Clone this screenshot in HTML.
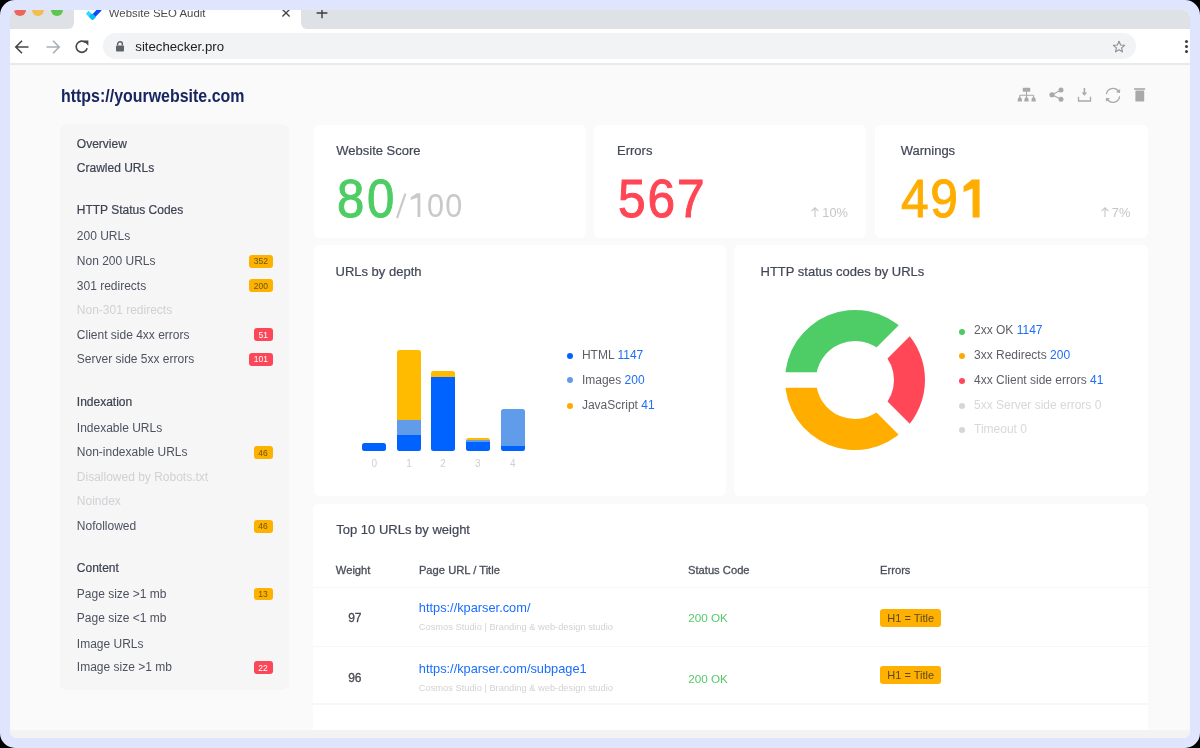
<!DOCTYPE html>
<html><head><meta charset="utf-8">
<style>
*{margin:0;padding:0;box-sizing:border-box}
html,body{width:1200px;height:748px;overflow:hidden;background:#000;font-family:"Liberation Sans",sans-serif}
.frame{position:absolute;left:0;top:0;width:1200px;height:748px;background:#dfe5fc;border-radius:15px}
.win{position:absolute;left:10px;top:10px;width:1180px;height:728px;border-radius:7px;overflow:hidden;background:#fafafa;will-change:transform}
.t{position:absolute;white-space:nowrap;line-height:0}
.r{position:absolute}
.b{position:absolute;border-radius:3px;font-size:8px;text-align:center;white-space:nowrap}
</style></head><body>
<div class="frame"></div>
<div class="win">
<div class="r" style="left:0.00px;top:0.00px;width:1180.00px;height:18.90px;background:#ffffff;"></div>
<div class="r" style="left:0.00px;top:0.00px;width:64.00px;height:18.90px;background:#dee1e6;border-bottom-right-radius:6px"></div>
<div class="r" style="left:291.00px;top:0.00px;width:889.00px;height:18.90px;background:#dee1e6;border-bottom-left-radius:6px"></div>
<div class="r" style="left:3.50px;top:-5.80px;width:12.00px;height:12.00px;background:#ec6559;border-radius:50%"></div>
<div class="r" style="left:22.00px;top:-5.80px;width:12.00px;height:12.00px;background:#f4bd4f;border-radius:50%"></div>
<div class="r" style="left:41.00px;top:-5.80px;width:12.00px;height:12.00px;background:#5ec54f;border-radius:50%"></div>
<svg class="r" style="left:74.00px;top:-4.00px;" width="18" height="14" viewBox="0 0 18 14"><path d="M3.2 6.2 L8.4 11.3" stroke="#3ad8ff" stroke-width="4" fill="none"/><path d="M7.9 11.7 L16.2 3" stroke="#0a4bff" stroke-width="4" fill="none"/><path d="M6 9.2 L8.5 11.7 L10.6 9.5" stroke="#05bffd" stroke-width="4" fill="none"/></svg>
<div class="t" style="left:98.80px;top:2.95px;font-size:11.4px;color:#4a4b4d;">Website SEO Audit</div>
<svg class="r" style="left:270.00px;top:-3.40px;" width="12" height="12" viewBox="0 0 12 12"><path d="M2.4 2.4 L9.6 9.6 M9.6 2.4 L2.4 9.6" stroke="#454749" stroke-width="1.4"/></svg>
<svg class="r" style="left:304.60px;top:-3.80px;" width="14" height="14" viewBox="0 0 14 14"><path d="M7 1.5 V12.3 M1.6 7 H12.4" stroke="#3c3d40" stroke-width="1.4"/></svg>
<div class="r" style="left:0.00px;top:18.90px;width:1180.00px;height:34.10px;background:#ffffff;"></div>
<div class="r" style="left:0.00px;top:53.00px;width:1180.00px;height:2.20px;background:#e9e9e9;"></div>
<svg class="r" style="left:4.00px;top:29.00px;" width="16" height="16" viewBox="0 0 16 16"><path d="M14.5 8 H2 M8 1.8 L1.8 8 L8 14.2" stroke="#45474a" stroke-width="1.6" fill="none"/></svg>
<svg class="r" style="left:35.00px;top:29.00px;" width="16" height="16" viewBox="0 0 16 16"><path d="M1.5 8 H14 M8 1.8 L14.2 8 L8 14.2" stroke="#a9afb7" stroke-width="1.6" fill="none"/></svg>
<svg class="r" style="left:64.00px;top:29.00px;" width="16" height="16" viewBox="0 0 16 16"><path d="M13.2 9.2 A5.6 5.6 0 1 1 11.6 3.6" stroke="#45474a" stroke-width="1.6" fill="none"/><path d="M9.2 1.6 L14.4 1.6 L14.4 6.8 Z" fill="#45474a"/></svg>
<div class="r" style="left:92.70px;top:23.10px;width:1033.20px;height:25.80px;background:#f1f3f4;border-radius:13px"></div>
<svg class="r" style="left:105.00px;top:31.00px;" width="10" height="11" viewBox="0 0 10 11"><path d="M2.6 4.5 V3.2 A2.4 2.4 0 0 1 7.4 3.2 V4.5" stroke="#5f6368" stroke-width="1.4" fill="none"/><rect x="1" y="4.5" width="8" height="6" rx="1" fill="#5f6368"/></svg>
<div class="t" style="left:125.30px;top:36.83px;font-size:13.2px;color:#202124;">sitechecker.pro</div>
<svg class="r" style="left:1101.70px;top:29.50px;" width="14" height="14" viewBox="0 0 14 14"><path d="M7 1.3 L8.6 5 L12.6 5.3 L9.6 7.9 L10.5 11.9 L7 9.8 L3.5 11.9 L4.4 7.9 L1.4 5.3 L5.4 5 Z" stroke="#8a8d91" stroke-width="1.1" fill="none" stroke-linejoin="round"/></svg>
<div class="r" style="left:1175.00px;top:30.00px;width:3.00px;height:3.00px;background:#3c3d40;border-radius:50%"></div>
<div class="r" style="left:1175.00px;top:34.80px;width:3.00px;height:3.00px;background:#3c3d40;border-radius:50%"></div>
<div class="r" style="left:1175.00px;top:39.60px;width:3.00px;height:3.00px;background:#3c3d40;border-radius:50%"></div>
<div class="t" style="left:51.40px;top:85.66px;font-size:18px;color:#172661;font-weight:700;transform:scaleX(0.886);transform-origin:0 0;">https://yourwebsite.com</div>
<svg class="r" style="left:1006.00px;top:76.00px;" width="22" height="18" viewBox="0 0 22 18"><rect x="6.75" y="1.75" width="7.5" height="4" rx="0.8" fill="#a9a9a9"/><path d="M10.5 5.7 V9.25 M3.8 9.25 H17.6 M3.8 9.25 V12 M10.5 9.25 V12 M17.6 9.25 V12" stroke="#a9a9a9" stroke-width="1.1" fill="none"/><path d="M1.6 15.4 Q1.6 11.3 3.8 11.3 Q6 11.3 6 15.4 Z M8.3 15.4 Q8.3 11.3 10.5 11.3 Q12.7 11.3 12.7 15.4 Z M15.4 15.4 Q15.4 11.3 17.6 11.3 Q19.8 11.3 19.8 15.4 Z" fill="#a9a9a9"/></svg>
<svg class="r" style="left:1038.00px;top:76.00px;" width="18" height="18" viewBox="0 0 18 18"><path d="M4 8.75 L13 4 M4 8.75 L13 13.25" stroke="#a9a9a9" stroke-width="1.1"/><circle cx="4" cy="8.75" r="2.6" fill="#a9a9a9"/><circle cx="13" cy="4" r="2.5" fill="#a9a9a9"/><circle cx="13" cy="13.25" r="2.5" fill="#a9a9a9"/></svg>
<svg class="r" style="left:1066.00px;top:76.00px;" width="18" height="18" viewBox="0 0 18 18"><path d="M8.4 2 V7" stroke="#a9a9a9" stroke-width="1.6" fill="none"/><path d="M5.6 6.4 L11.2 6.4 L8.4 9.8 Z" fill="#a9a9a9"/><path d="M2.5 10.8 V15 H14.5 V10.8" stroke="#a9a9a9" stroke-width="1.3" fill="none"/></svg>
<svg class="r" style="left:1094.00px;top:76.00px;" width="18" height="18" viewBox="0 0 18 18"><path d="M2.4 8.3 A6.7 6.7 0 0 1 14.6 5.3 M15.6 10.4 A6.7 6.7 0 0 1 3.4 13.4" stroke="#a9a9a9" stroke-width="1.3" fill="none"/><path d="M12 6.2 L16 6.9 L16.2 2.9 Z M6 12.4 L2 11.8 L1.8 15.8 Z" fill="#a9a9a9"/></svg>
<svg class="r" style="left:1122.00px;top:76.00px;" width="16" height="18" viewBox="0 0 16 18"><rect x="2.1" y="2.2" width="11" height="1.6" fill="#a9a9a9"/><rect x="3.4" y="4.45" width="8.8" height="11.05" rx="0.6" fill="#a9a9a9"/></svg>
<div class="r" style="left:50.00px;top:114.20px;width:229.00px;height:566.20px;background:#f6f6f7;border-radius:7px"></div>
<div class="t" style="left:66.80px;top:133.94px;font-size:12px;color:#3e4352;-webkit-text-stroke:0.2px #3e4352;">Overview</div>
<div class="t" style="left:66.80px;top:158.34px;font-size:12px;color:#3e4352;-webkit-text-stroke:0.2px #3e4352;">Crawled URLs</div>
<div class="t" style="left:66.80px;top:200.04px;font-size:12px;color:#3e4352;-webkit-text-stroke:0.2px #3e4352;">HTTP Status Codes</div>
<div class="t" style="left:66.80px;top:391.54px;font-size:12px;color:#3e4352;-webkit-text-stroke:0.2px #3e4352;">Indexation</div>
<div class="t" style="left:66.80px;top:557.54px;font-size:12px;color:#3e4352;-webkit-text-stroke:0.2px #3e4352;">Content</div>
<div class="t" style="left:66.80px;top:226.44px;font-size:12px;color:#4e5260;">200 URLs</div>
<div class="t" style="left:66.80px;top:251.14px;font-size:12px;color:#4e5260;">Non 200 URLs</div>
<div class="t" style="left:66.80px;top:275.74px;font-size:12px;color:#4e5260;">301 redirects</div>
<div class="t" style="left:66.80px;top:300.04px;font-size:12px;color:#d0d1d4;">Non-301 redirects</div>
<div class="t" style="left:66.80px;top:324.94px;font-size:12px;color:#4e5260;">Client side 4xx errors</div>
<div class="t" style="left:66.80px;top:349.34px;font-size:12px;color:#4e5260;">Server side 5xx errors</div>
<div class="t" style="left:66.80px;top:417.94px;font-size:12px;color:#4e5260;">Indexable URLs</div>
<div class="t" style="left:66.80px;top:442.44px;font-size:12px;color:#4e5260;">Non-indexable URLs</div>
<div class="t" style="left:66.80px;top:467.04px;font-size:12px;color:#d0d1d4;">Disallowed by Robots.txt</div>
<div class="t" style="left:66.80px;top:491.14px;font-size:12px;color:#d0d1d4;">Noindex</div>
<div class="t" style="left:66.80px;top:515.64px;font-size:12px;color:#4e5260;">Nofollowed</div>
<div class="t" style="left:66.80px;top:583.94px;font-size:12px;color:#4e5260;">Page size &gt;1 mb</div>
<div class="t" style="left:66.80px;top:608.44px;font-size:12px;color:#4e5260;">Page size &lt;1 mb</div>
<div class="t" style="left:66.80px;top:633.54px;font-size:12px;color:#4e5260;">Image URLs</div>
<div class="t" style="left:66.80px;top:657.14px;font-size:12px;color:#4e5260;">Image size &gt;1 mb</div>
<div class="r" style="left:238.80px;top:244.80px;width:24.00px;height:12.80px;background:#fdb200;border-radius:3px"></div>
<div class="t" style="left:238.80px;width:24.00px;text-align:center;top:251.30px;font-size:8.5px;color:#6d5410">352</div>
<div class="r" style="left:238.80px;top:269.10px;width:24.00px;height:12.90px;background:#fdb200;border-radius:3px"></div>
<div class="t" style="left:238.80px;width:24.00px;text-align:center;top:275.65px;font-size:8.5px;color:#6d5410">200</div>
<div class="r" style="left:243.60px;top:318.20px;width:19.20px;height:12.80px;background:#fb4758;border-radius:3px"></div>
<div class="t" style="left:243.60px;width:19.20px;text-align:center;top:324.70px;font-size:8.5px;color:#ffffff">51</div>
<div class="r" style="left:238.80px;top:342.90px;width:24.00px;height:12.90px;background:#fb4758;border-radius:3px"></div>
<div class="t" style="left:238.80px;width:24.00px;text-align:center;top:349.45px;font-size:8.5px;color:#ffffff">101</div>
<div class="r" style="left:243.50px;top:436.20px;width:19.20px;height:12.90px;background:#fdb200;border-radius:3px"></div>
<div class="t" style="left:243.50px;width:19.20px;text-align:center;top:442.75px;font-size:8.5px;color:#6d5410">46</div>
<div class="r" style="left:243.50px;top:509.70px;width:19.20px;height:12.90px;background:#fdb200;border-radius:3px"></div>
<div class="t" style="left:243.50px;width:19.20px;text-align:center;top:516.25px;font-size:8.5px;color:#6d5410">46</div>
<div class="r" style="left:243.50px;top:577.70px;width:19.20px;height:12.80px;background:#fdb200;border-radius:3px"></div>
<div class="t" style="left:243.50px;width:19.20px;text-align:center;top:584.20px;font-size:8.5px;color:#6d5410">13</div>
<div class="r" style="left:243.50px;top:651.10px;width:19.20px;height:12.80px;background:#fb4758;border-radius:3px"></div>
<div class="t" style="left:243.50px;width:19.20px;text-align:center;top:657.60px;font-size:8.5px;color:#ffffff">22</div>
<div class="r" style="left:303.50px;top:114.50px;width:272.50px;height:113.50px;background:#ffffff;border-radius:6px"></div>
<div class="r" style="left:583.90px;top:114.50px;width:272.60px;height:113.50px;background:#ffffff;border-radius:6px"></div>
<div class="r" style="left:865.00px;top:114.50px;width:272.70px;height:113.50px;background:#ffffff;border-radius:6px"></div>
<div class="t" style="left:326.25px;top:140.90px;font-size:13px;color:#424757;-webkit-text-stroke:0.2px #424757;">Website Score</div>
<div class="t" style="left:607.00px;top:140.90px;font-size:13px;color:#424757;-webkit-text-stroke:0.2px #424757;">Errors</div>
<div class="t" style="left:890.70px;top:140.90px;font-size:13px;color:#424757;-webkit-text-stroke:0.2px #424757;">Warnings</div>
<div class="t" style="left:326.80px;top:188.62px;font-size:54.5px;color:#4dcd64;-webkit-text-stroke:1.0px #4dcd64;letter-spacing:3px;transform:scaleX(0.9);transform-origin:0 0;">80</div>
<div class="t" style="left:417.00px;top:195.42px;font-size:34px;color:#c9c9c9;letter-spacing:1.5px;transform:scaleX(0.9);transform-origin:0 0;">00</div>
<svg class="r" style="left:382.00px;top:180.00px;" width="32" height="32" viewBox="0 0 32 32"><path d="M5 28.2 L13.4 3.6" stroke="#c9c9c9" stroke-width="2.2"/><path d="M25.5 3.3 H28.3 V27 H25.5 V7.4 L18.7 10 V7.3 L25 3.3 Z" fill="#c9c9c9"/></svg>
<div class="t" style="left:608.00px;top:188.29px;font-size:54px;color:#ff4654;-webkit-text-stroke:1.0px #ff4654;letter-spacing:2px;transform:scaleX(0.92);transform-origin:0 0;">567</div>
<div class="t" style="left:891.00px;top:188.29px;font-size:54px;color:#ffad00;-webkit-text-stroke:1.0px #ffad00;letter-spacing:1.8px;transform:scaleX(0.92);transform-origin:0 0;">49</div>
<svg class="r" style="left:950.00px;top:166.00px;" width="24" height="44" viewBox="0 0 24 44"><path d="M12.6 3.6 H19.6 V41.5 H12.6 V12.6 L3.6 15.9 V10.2 L12 3.6 Z" fill="#ffad00"/></svg>
<div class="t" style="left:812.30px;top:202.56px;font-size:12.8px;color:#c6c6c6;">10%</div>
<svg class="r" style="left:800.00px;top:196.00px;" width="10" height="12" viewBox="0 0 10 12"><path d="M5 11 V1.8 M1.6 5.2 L5 1.8 L8.4 5.2" stroke="#c6c6c6" stroke-width="1.1" fill="none"/></svg>
<div class="t" style="left:1101.80px;top:202.56px;font-size:12.8px;color:#c6c6c6;">7%</div>
<svg class="r" style="left:1089.50px;top:196.00px;" width="10" height="12" viewBox="0 0 10 12"><path d="M5 11 V1.8 M1.6 5.2 L5 1.8 L8.4 5.2" stroke="#c6c6c6" stroke-width="1.1" fill="none"/></svg>
<div class="r" style="left:303.50px;top:235.30px;width:412.30px;height:250.70px;background:#ffffff;border-radius:6px"></div>
<div class="r" style="left:724.30px;top:235.30px;width:413.40px;height:250.70px;background:#ffffff;border-radius:6px"></div>
<div class="t" style="left:325.50px;top:261.50px;font-size:13px;color:#424757;-webkit-text-stroke:0.2px #424757;">URLs by depth</div>
<div class="t" style="left:750.50px;top:262.10px;font-size:13px;color:#424757;-webkit-text-stroke:0.2px #424757;">HTTP status codes by URLs</div>
<div class="r" style="left:351.90px;top:433.25px;width:24.60px;height:7.50px;border-radius:2.5px;overflow:hidden"><div style="position:absolute;left:0;top:0.00px;width:100%;height:7.50px;background:#0062ff"></div></div>
<div class="r" style="left:387.00px;top:340.00px;width:24.20px;height:100.75px;border-radius:2.5px;overflow:hidden"><div style="position:absolute;left:0;top:0.00px;width:100%;height:69.70px;background:#ffbb00"></div><div style="position:absolute;left:0;top:69.70px;width:100%;height:15.60px;background:#609cea"></div><div style="position:absolute;left:0;top:85.30px;width:100%;height:15.45px;background:#0062ff"></div></div>
<div class="r" style="left:421.00px;top:360.50px;width:24.20px;height:80.25px;border-radius:2.5px;overflow:hidden"><div style="position:absolute;left:0;top:0.00px;width:100%;height:6.80px;background:#ffbb00"></div><div style="position:absolute;left:0;top:6.80px;width:100%;height:73.45px;background:#0062ff"></div></div>
<div class="r" style="left:455.70px;top:428.20px;width:24.30px;height:12.55px;border-radius:2.5px;overflow:hidden"><div style="position:absolute;left:0;top:0.00px;width:100%;height:1.40px;background:#ffbb00"></div><div style="position:absolute;left:0;top:1.40px;width:100%;height:2.20px;background:#609cea"></div><div style="position:absolute;left:0;top:3.60px;width:100%;height:8.95px;background:#0062ff"></div></div>
<div class="r" style="left:490.50px;top:399.20px;width:24.50px;height:41.55px;border-radius:2.5px;overflow:hidden"><div style="position:absolute;left:0;top:0.00px;width:100%;height:36.80px;background:#609cea"></div><div style="position:absolute;left:0;top:36.80px;width:100%;height:4.75px;background:#0062ff"></div></div>
<div class="t" style="left:344.20px;width:40px;text-align:center;top:454.24px;font-size:10px;color:#cfcfcf">0</div>
<div class="t" style="left:379.10px;width:40px;text-align:center;top:454.24px;font-size:10px;color:#cfcfcf">1</div>
<div class="t" style="left:413.10px;width:40px;text-align:center;top:454.24px;font-size:10px;color:#cfcfcf">2</div>
<div class="t" style="left:447.85px;width:40px;text-align:center;top:454.24px;font-size:10px;color:#cfcfcf">3</div>
<div class="t" style="left:482.75px;width:40px;text-align:center;top:454.24px;font-size:10px;color:#cfcfcf">4</div>
<div class="r" style="left:556.70px;top:342.90px;width:6.20px;height:6.20px;background:#0062ff;border-radius:50%"></div>
<div class="t" style="left:571.90px;top:345.44px;font-size:12px;color:#5d5f66;">HTML <span style="color:#1f6ff5">1147</span></div>
<div class="r" style="left:556.70px;top:367.30px;width:6.20px;height:6.20px;background:#609cea;border-radius:50%"></div>
<div class="t" style="left:571.90px;top:369.74px;font-size:12px;color:#5d5f66;">Images <span style="color:#1f6ff5">200</span></div>
<div class="r" style="left:556.70px;top:393.00px;width:6.20px;height:6.20px;background:#ffaa00;border-radius:50%"></div>
<div class="t" style="left:571.90px;top:395.34px;font-size:12px;color:#5d5f66;">JavaScript <span style="color:#1f6ff5">41</span></div>
<svg class="r" style="left:764.70px;top:289.60px;" width="160" height="160" viewBox="0 0 160 160"><g transform="translate(80 80)"><path d="M49.50 -49.50 A70 70 0 0 0 -70.00 -0.00 L-39.00 -0.00 A39 39 0 0 1 27.58 -27.58 Z" fill="#4ecd66"/><path d="M49.50 49.50 A70 70 0 0 0 49.50 -49.50 L27.58 -27.58 A39 39 0 0 1 27.58 27.58 Z" fill="#ff4757"/><path d="M-70.00 -0.00 A70 70 0 0 0 49.50 49.50 L27.58 27.58 A39 39 0 0 1 -39.00 -0.00 Z" fill="#ffae00"/><path d="M0 0 L-90 0" stroke="#fff" stroke-width="15.5"/><path d="M0 0 L64 -64" stroke="#fff" stroke-width="15.5"/><path d="M0 0 L64 64" stroke="#fff" stroke-width="15.5"/></g></svg>
<div class="r" style="left:948.80px;top:318.50px;width:6.00px;height:6.00px;background:#4cca62;border-radius:50%"></div>
<div class="t" style="left:964.00px;top:320.44px;font-size:12px;color:#5d5f66;">2xx OK <span style="color:#1f6ff5">1147</span></div>
<div class="r" style="left:948.80px;top:343.20px;width:6.00px;height:6.00px;background:#ffaa00;border-radius:50%"></div>
<div class="t" style="left:964.00px;top:345.14px;font-size:12px;color:#5d5f66;">3xx Redirects <span style="color:#1f6ff5">200</span></div>
<div class="r" style="left:948.80px;top:368.00px;width:6.00px;height:6.00px;background:#ff4757;border-radius:50%"></div>
<div class="t" style="left:964.00px;top:370.34px;font-size:12px;color:#5d5f66;">4xx Client side errors <span style="color:#1f6ff5">41</span></div>
<div class="r" style="left:948.80px;top:392.70px;width:6.00px;height:6.00px;background:#d6d6d6;border-radius:50%"></div>
<div class="t" style="left:964.00px;top:395.04px;font-size:12px;color:#5d5f66;"><span style="color:#d8d8d8">5xx Server side errors 0</span></div>
<div class="r" style="left:948.80px;top:417.00px;width:6.00px;height:6.00px;background:#d6d6d6;border-radius:50%"></div>
<div class="t" style="left:964.00px;top:419.34px;font-size:12px;color:#5d5f66;"><span style="color:#d8d8d8">Timeout 0</span></div>
<div class="r" style="left:303.30px;top:493.50px;width:834.40px;height:233.50px;background:#ffffff;border-radius:6px"></div>
<div class="t" style="left:326.30px;top:520.20px;font-size:13px;color:#424757;-webkit-text-stroke:0.2px #424757;">Top 10 URLs by weight</div>
<div class="t" style="left:325.80px;top:560.42px;font-size:11.2px;color:#4a4e5a;-webkit-text-stroke:0.3px #4a4e5a;">Weight</div>
<div class="t" style="left:408.90px;top:560.42px;font-size:11.2px;color:#4a4e5a;-webkit-text-stroke:0.3px #4a4e5a;">Page URL / Title</div>
<div class="t" style="left:678.00px;top:560.42px;font-size:11.2px;color:#4a4e5a;-webkit-text-stroke:0.3px #4a4e5a;">Status Code</div>
<div class="t" style="left:870.00px;top:560.42px;font-size:11.2px;color:#4a4e5a;-webkit-text-stroke:0.3px #4a4e5a;">Errors</div>
<div class="r" style="left:303.30px;top:576.70px;width:834.40px;height:1.80px;background:#f7f7f8;"></div>
<div class="r" style="left:303.30px;top:635.70px;width:834.40px;height:1.60px;background:#f7f7f8;"></div>
<div class="r" style="left:303.30px;top:693.00px;width:834.40px;height:1.60px;background:#f7f7f8;"></div>
<div class="t" style="left:338.20px;top:607.74px;font-size:12px;color:#474a52;-webkit-text-stroke:0.3px #474a52;">97</div>
<div class="t" style="left:408.80px;top:598.26px;font-size:12.8px;color:#1a6dff;">https://kparser.com/</div>
<div class="t" style="left:408.80px;top:617.38px;font-size:9.3px;color:#d2d2d2;">Cosmos Studio | Branding &amp; web-design studio</div>
<div class="t" style="left:678.20px;top:608.45px;font-size:11.7px;color:#55c96c;">200 OK</div>
<div class="t" style="left:338.20px;top:668.24px;font-size:12px;color:#474a52;-webkit-text-stroke:0.3px #474a52;">96</div>
<div class="t" style="left:408.80px;top:658.76px;font-size:12.8px;color:#1a6dff;">https://kparser.com/subpage1</div>
<div class="t" style="left:408.80px;top:677.88px;font-size:9.3px;color:#d2d2d2;">Cosmos Studio | Branding &amp; web-design studio</div>
<div class="t" style="left:678.20px;top:668.95px;font-size:11.7px;color:#55c96c;">200 OK</div>
<div class="r" style="left:870.20px;top:598.50px;width:61.10px;height:18.50px;background:#ffb000;border-radius:3px"></div>
<div class="t" style="left:870.20px;width:61.10px;text-align:center;top:607.88px;font-size:11px;color:#5b4a1c">H1 = Title</div>
<div class="r" style="left:870.20px;top:656.20px;width:61.10px;height:18.20px;background:#ffb000;border-radius:3px"></div>
<div class="t" style="left:870.20px;width:61.10px;text-align:center;top:665.43px;font-size:11px;color:#5b4a1c">H1 = Title</div>
<div class="r" style="left:0.00px;top:719.50px;width:1180.00px;height:8.50px;background:#f3f3f3;"></div>
</div>
</body></html>
